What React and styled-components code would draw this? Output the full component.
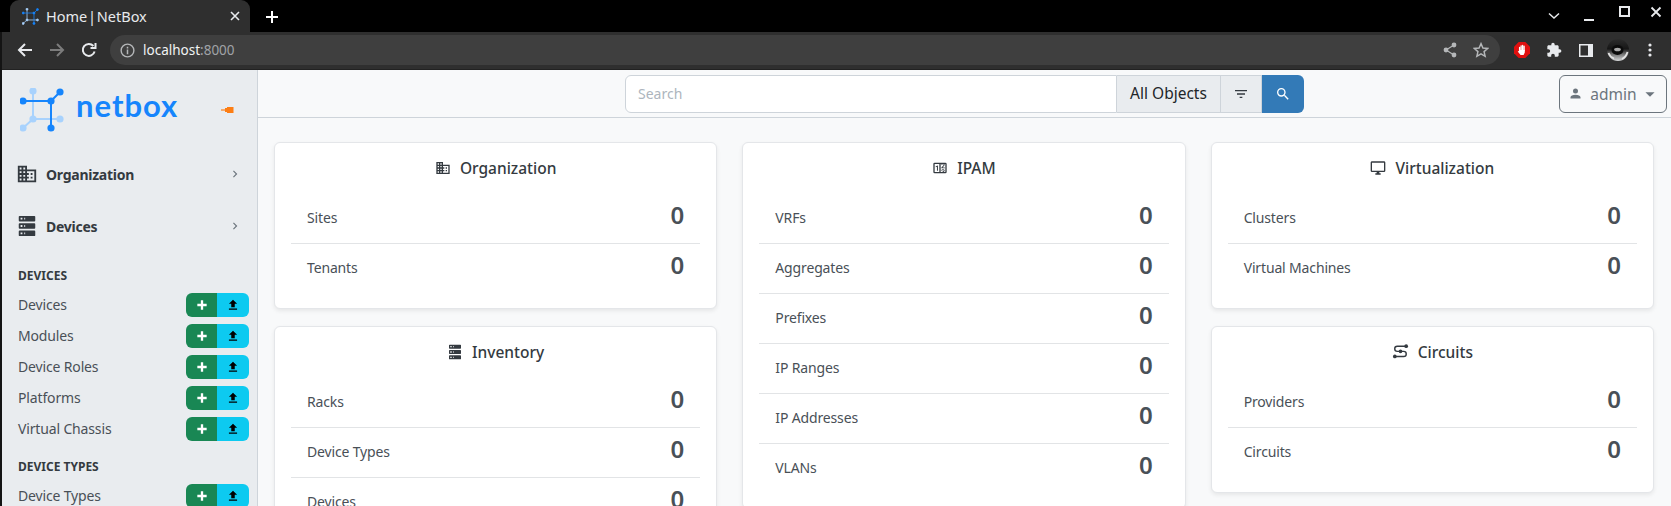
import React from 'react';
import styled, { createGlobalStyle } from 'styled-components';

const UI_FONT = '"Noto Sans", "Open Sans", sans-serif';

const GlobalStyle = createGlobalStyle`
  html, body {
    margin: 0;
    padding: 0;
    height: 506px;
    overflow: hidden;
    background: #111;
    font-family: ${UI_FONT};
  }
  * { box-sizing: border-box; }
`;

const MDI = {
  domain: 'M18,15H16V17H18M18,11H16V13H18M20,19H12V17H14V15H12V13H14V11H12V9H20M10,7H8V5H10M10,11H8V9H10M10,15H8V13H10M10,19H8V17H10M6,7H4V5H6M6,11H4V9H6M6,15H4V13H6M6,19H4V17H6M12,7V3H2V21H22V7H12Z',
  server: 'M4,1H20A1,1 0 0,1 21,2V6A1,1 0 0,1 20,7H4A1,1 0 0,1 3,6V2A1,1 0 0,1 4,1M4,9H20A1,1 0 0,1 21,10V14A1,1 0 0,1 20,15H4A1,1 0 0,1 3,14V10A1,1 0 0,1 4,9M4,17H20A1,1 0 0,1 21,18V22A1,1 0 0,1 20,23H4A1,1 0 0,1 3,22V18A1,1 0 0,1 4,17M9,5H10V3H9V5M9,13H10V11H9V13M9,21H10V19H9V21M5,3V5H7V3H5M5,11V13H7V11H5M5,19V21H7V19H5Z',
  counter: 'M4,4H20A2,2 0 0,1 22,6V18A2,2 0 0,1 20,20H4A2,2 0 0,1 2,18V6A2,2 0 0,1 4,4M4,6V18H11V6H4M20,18V6H18.76C19,6.54 18.95,7.07 18.95,7.13C18.88,7.8 18.41,8.5 18.24,8.75L15.91,11.3L19.23,11.28L19.24,12.5L14.04,12.47L14,11.47C14,11.47 17.05,8.24 17.2,7.95C17.34,7.67 17.91,6 16.5,6C15.27,6.05 15.41,7.3 15.41,7.3L13.87,7.31C13.87,7.31 13.88,6.65 14.25,6H13V18H15.58L15.57,17.14L16.54,17.13C16.54,17.13 17.45,16.97 17.46,16.08C17.5,15.08 16.65,15.08 16.5,15.08C16.37,15.08 15.43,15.13 15.43,15.95H13.91C13.91,15.95 13.95,13.89 16.5,13.89C19.1,13.89 18.96,15.91 18.96,15.91C18.96,15.91 19,17.16 17.85,17.63L18.37,18H20M8.92,16H7.42V10.2L5.62,10.76V9.53L8.76,8.41H8.92V16Z',
  monitor: 'M21,16H3V4H21M21,2H3C1.89,2 1,2.89 1,4V16A2,2 0 0,0 3,18H10V20H8V22H16V20H14V18H21A2,2 0 0,0 23,16V4C23,2.89 22.1,2 21,2Z',
  magnify: 'M9.5,3A6.5,6.5 0 0,1 16,9.5C16,11.11 15.41,12.59 14.44,13.73L14.71,14H15.5L20.5,19L19,20.5L14,15.5V14.71L13.73,14.44C12.59,15.41 11.11,16 9.5,16A6.5,6.5 0 0,1 3,9.5A6.5,6.5 0 0,1 9.5,3M9.5,5C7,5 5,7 5,9.5C5,12 7,14 9.5,14C12,14 14,12 14,9.5C14,7 12,5 9.5,5Z',
  filter: 'M6,13H18V11H6M3,6V8H21V6M10,18H14V16H10V18Z',
  plus: 'M20 14H14V20H10V14H4V10H10V4H14V10H20V14Z',
  upload: 'M9,16V10H5L12,3L19,10H15V16H9M5,20V18H19V20H5Z',
  account: 'M12,4A4,4 0 0,1 16,8A4,4 0 0,1 12,12A4,4 0 0,1 8,8A4,4 0 0,1 12,4M12,14C16.42,14 20,15.79 20,18V20H4V18C4,15.79 7.58,14 12,14Z',
  chevron: 'M8.59,16.58L13.17,12L8.59,7.41L10,6L16,12L10,18L8.59,16.58Z',
  caret: 'M7,10L12,15L17,10H7Z',
};

const MdiIcon = ({ name, size = 16, color = 'currentColor' }) => (
  <svg width={size} height={size} viewBox="0 0 24 24" fill={color} style={{ flex: 'none', display: 'block' }}>
    <path d={MDI[name]} />
  </svg>
);

// transit-connection style glyph: an S line with a dot on each end and one in the middle
const CircuitIcon = ({ size = 17 }) => (
  <svg width={size} height={size} viewBox="0 0 24 24" fill="currentColor" style={{ flex: 'none', display: 'block' }}>
    <path d="M20 4.5H7.5A3.5 3.5 0 0 0 7.5 11.8H16.5A3.5 3.5 0 0 1 16.5 19H4" fill="none" stroke="currentColor" strokeWidth="2" />
    <circle cx="20" cy="4.5" r="2.6" />
    <circle cx="12" cy="11.8" r="2.6" />
    <circle cx="4" cy="19" r="2.6" />
  </svg>
);

const NetboxMark = ({ size }) => (
  <svg width={size} height={size} viewBox="0 0 44 44" style={{ flex: 'none', display: 'block' }}>
    <g stroke="#a8d2fd" strokeWidth="2" fill="#a8d2fd">
      <path d="M13 3V31M13 31H40M13 31L3 40" fill="none" />
      <circle cx="13" cy="3" r="2.6" />
      <circle cx="13" cy="31" r="2.6" />
      <circle cx="40" cy="31" r="2.6" />
      <circle cx="3" cy="40" r="2.6" />
    </g>
    <g stroke="#1685fc" strokeWidth="2" fill="#1685fc">
      <path d="M3 13H31M31 13V40M31 13L40 4" fill="none" />
      <circle cx="3" cy="13" r="2.6" />
      <circle cx="31" cy="13" r="2.6" />
      <circle cx="40" cy="4" r="2.6" />
      <circle cx="31" cy="40" r="2.6" />
    </g>
  </svg>
);

/* browser chrome */
const Shell = styled.div`
  height: 506px;
  padding-left: 2px;
  display: flex;
  flex-direction: column;
  overflow: hidden;
  background: #141414;
`;

const TabStrip = styled.div`
  height: 32px;
  flex: none;
  display: flex;
  align-items: flex-end;
  background: #000;
  margin-left: -2px;
  padding-left: 10px;
`;

const Tab = styled.div`
  width: 240px;
  height: 32px;
  background: #2f2f2f;
  border-radius: 9px 9px 0 0;
  display: flex;
  align-items: center;
  padding: 0 9px 0 12px;
  color: #e8eaed;
  font-size: 14.5px;
`;

const TabTitle = styled.span`
  margin-left: 7px;
  flex: 1;
  white-space: nowrap;
  word-spacing: -3px;
`;

const NewTab = styled.div`
  width: 44px;
  display: flex;
  justify-content: center;
  align-items: center;
  height: 30px;
`;

const WindowControls = styled.div`
  margin-left: auto;
  display: flex;
  align-items: center;
  height: 32px;
  padding-right: 9px;
  gap: 16px;
`;

const Toolbar = styled.div`
  height: 38px;
  flex: none;
  background: #2f2f2f;
  border-bottom: 1px solid #222;
  display: flex;
  align-items: center;
  padding: 0 0 1px 7px;
`;

const NavIcon = styled.div`
  width: 32px;
  display: flex;
  justify-content: center;
  color: ${(p) => (p.$dim ? '#7c7c7c' : '#e8eaed')};
`;

const Omnibox = styled.div`
  margin-left: 5px;
  width: 1390px;
  height: 30px;
  border-radius: 15px;
  background: #3f3f3f;
  display: flex;
  align-items: center;
  padding: 0 11px 0 10px;
  font-size: 13.5px;
  color: #f1f3f4;
  flex: none;
`;

const UrlHost = styled.span`
  margin-left: 8px;
`;

const UrlPort = styled.span`
  color: #a0a3a7;
`;

const OmniActions = styled.div`
  margin-left: auto;
  display: flex;
  gap: 16px;
  color: #b5b7b9;
  align-items: center;
`;

const Extensions = styled.div`
  display: flex;
  align-items: center;
  margin-left: 6px;
`;

const ExtSlot = styled.div`
  width: 32px;
  display: flex;
  justify-content: center;
  align-items: center;
  color: #e8eaed;
`;

/* app */
const Body = styled.div`
  flex: 1;
  min-height: 0;
  display: flex;
`;

const Sidebar = styled.aside`
  width: 256px;
  flex: none;
  background: #e9ecef;
  border-right: 1px solid #ced4da;
  overflow: hidden;
`;

const Brand = styled.div`
  height: 78px;
  display: flex;
  align-items: flex-start;
  padding: 18px 0 0 18px;
`;

const BrandName = styled.span`
  margin: -1px 0 0 12px;
  font-family: Lato, sans-serif;
  font-weight: 700;
  font-size: 31px;
  line-height: 36px;
  letter-spacing: 1px;
  color: #1685fc;
`;

const Pin = styled.div`
  margin: 18px 0 0 43px;
  line-height: 0;
`;

const NavGroup = styled.div`
  height: 52px;
  display: flex;
  align-items: center;
  padding: 0 15px 0 14px;
  font-size: 14px;
  font-weight: 700;
  color: #343a40;
`;

const NavGroupLabel = styled.span`
  margin-left: 8px;
  flex: 1;
  letter-spacing: -0.25px;
`;

const NavChevron = styled.div`
  color: #6c757d;
`;

const Section = styled.div`
  padding-top: ${(p) => p.$top}px;
`;

const SectionTitle = styled.div`
  height: 27px;
  line-height: 28px;
  padding-left: 16px;
  font-size: 12px;
  font-weight: 700;
  color: #343a40;
  text-transform: uppercase;
`;

const SideRow = styled.div`
  height: 31px;
  display: flex;
  align-items: center;
  justify-content: space-between;
  padding: 0 8px 0 16px;
  font-size: 14px;
  color: #495057;
  letter-spacing: -0.15px;
`;

const ButtonGroup = styled.div`
  display: flex;
  height: 24px;
  border-radius: 6px;
  overflow: hidden;
`;

const AddButton = styled.div`
  width: 31px;
  display: flex;
  align-items: center;
  justify-content: center;
  background: #198754;
  color: #fff;
`;

const ImportButton = styled.div`
  width: 32px;
  display: flex;
  align-items: center;
  justify-content: center;
  background: #0dcaf0;
  color: #000;
`;

const Main = styled.main`
  flex: 1;
  min-width: 0;
  background: #f8f9fa;
  display: flex;
  flex-direction: column;
`;

const Header = styled.header`
  height: 48px;
  flex: none;
  border-bottom: 1px solid #ced4da;
  display: flex;
  align-items: flex-start;
  padding: 5px 4px 0 367px;
  justify-content: space-between;
`;

const SearchGroup = styled.div`
  width: 679px;
  height: 38px;
  display: flex;
  font-size: 15.5px;
`;

const SearchInput = styled.div`
  flex: 1;
  background: #fff;
  border: 1px solid #ced4da;
  border-radius: 6px 0 0 6px;
  display: flex;
  align-items: center;
  padding: 0 0 2px 12px;
  font-size: 14px;
  color: #adb5bd;
`;

const ObjectSelect = styled.div`
  width: 104px;
  background: #e9ecef;
  border: 1px solid #ced4da;
  border-left: none;
  display: flex;
  align-items: center;
  justify-content: center;
  color: #212529;
  white-space: nowrap;
  padding-bottom: 2px;
`;

const FilterButton = styled.div`
  width: 41px;
  background: #e9ecef;
  border: 1px solid #ced4da;
  border-left: none;
  display: flex;
  align-items: center;
  justify-content: center;
  color: #343a40;
`;

const SearchButton = styled.div`
  width: 42px;
  background: #337ab7;
  border-radius: 0 6px 6px 0;
  display: flex;
  align-items: center;
  justify-content: center;
  color: #fff;
`;

const UserButton = styled.div`
  width: 108px;
  height: 38px;
  border: 1px solid #6c757d;
  border-radius: 6px;
  display: flex;
  align-items: center;
  justify-content: center;
  font-size: 15.5px;
  color: #6c757d;
  padding: 0 0 1px 3px;
`;

const UserName = styled.span`
  margin: 0 2px 0 7px;
`;

const Content = styled.div`
  flex: 1;
  min-height: 0;
  overflow: hidden;
  padding: 24px 17px 0 16px;
  display: grid;
  grid-template-columns: repeat(3, 1fr);
  column-gap: 25px;
  align-items: start;
`;

const Column = styled.div`
  display: flex;
  flex-direction: column;
  gap: 17px;
`;

const Card = styled.section`
  background: #fff;
  border: 1px solid #e4e6e9;
  border-radius: 6px;
  box-shadow: 0 2px 4px rgba(0, 0, 0, 0.075);
  padding: 0 16px 14px;
`;

const CardTitle = styled.h5`
  margin: 0;
  height: 51px;
  padding-bottom: 2px;
  display: flex;
  align-items: center;
  justify-content: center;
  gap: 9px;
  font-size: 15.5px;
  font-weight: 500;
  color: #343a40;
`;

const CountRow = styled.div`
  height: 50px;
  display: flex;
  justify-content: space-between;
  align-items: center;
  padding: 0 16px;
  border-bottom: ${(p) => (p.$last ? 'none' : '1px solid #e2e4e6')};
`;

const CountLabel = styled.span`
  font-size: 14px;
  color: #495057;
  letter-spacing: -0.15px;
  padding-bottom: 3px;
`;

const CountValue = styled.span`
  font-size: 24px;
  font-weight: 600;
  color: #495057;
  line-height: 1;
  padding-bottom: 8px;
`;

const COLUMNS = [
  [
    { title: 'Organization', icon: 'domain', rows: ['Sites', 'Tenants'] },
    { title: 'Inventory', icon: 'server', rows: ['Racks', 'Device Types', 'Devices'] },
  ],
  [
    { title: 'IPAM', icon: 'counter', rows: ['VRFs', 'Aggregates', 'Prefixes', 'IP Ranges', 'IP Addresses', 'VLANs'] },
  ],
  [
    { title: 'Virtualization', icon: 'monitor', rows: ['Clusters', 'Virtual Machines'] },
    { title: 'Circuits', icon: 'circuit', rows: ['Providers', 'Circuits'] },
  ],
];

const SideItem = ({ label }) => (
  <SideRow>
    {label}
    <ButtonGroup>
      <AddButton><MdiIcon name="plus" size={14} /></AddButton>
      <ImportButton><MdiIcon name="upload" size={14} /></ImportButton>
    </ButtonGroup>
  </SideRow>
);

const stroke = { fill: 'none', stroke: 'currentColor', strokeWidth: 2 };

const App = () => (
  <Shell>
    <GlobalStyle />
    <TabStrip>
      <Tab>
        <NetboxMark size={17} />
        <TabTitle>Home | NetBox</TabTitle>
        <svg width="12" height="12" viewBox="0 0 12 12">
          <path d="M2 2L10 10M10 2L2 10" stroke="#e8eaed" strokeWidth="1.6" />
        </svg>
      </Tab>
      <NewTab>
        <svg width="14" height="14" viewBox="0 0 14 14">
          <path d="M7 1V13M1 7H13" stroke="#fff" strokeWidth="2" />
        </svg>
      </NewTab>
      <WindowControls>
        <svg width="12" height="12" viewBox="0 0 12 12" style={{ marginRight: 7 }}>
          <path d="M1 3.5L6 8L11 3.5" fill="none" stroke="#e8eaed" strokeWidth="1.5" />
        </svg>
        <svg width="12" height="12" viewBox="0 0 12 12" style={{ marginRight: 8 }}>
          <path d="M1 10H11" stroke="#e8eaed" strokeWidth="2" />
        </svg>
        <svg width="12" height="12" viewBox="0 0 12 12" style={{ marginTop: -8, marginRight: 3 }}>
          <rect x="1" y="1" width="9" height="9" fill="none" stroke="#e8eaed" strokeWidth="2" />
        </svg>
        <svg width="12" height="12" viewBox="0 0 12 12" style={{ marginTop: -8 }}>
          <path d="M1.5 1.5L10.5 10.5M10.5 1.5L1.5 10.5" stroke="#e8eaed" strokeWidth="1.8" />
        </svg>
      </WindowControls>
    </TabStrip>
    <Toolbar>
      <NavIcon>
        <svg width="16" height="16" viewBox="0 0 16 16"><path d="M15 8H2M8 2L2 8L8 14" style={stroke} /></svg>
      </NavIcon>
      <NavIcon $dim>
        <svg width="16" height="16" viewBox="0 0 16 16"><path d="M1 8H14M8 2L14 8L8 14" style={stroke} /></svg>
      </NavIcon>
      <NavIcon>
        <svg width="16" height="16" viewBox="0 0 16 16"><path d="M13.6 9.5A6 6 0 1 1 12.4 4M14.5 1V6H9.5" style={stroke} /></svg>
      </NavIcon>
      <Omnibox>
        <svg width="15" height="15" viewBox="0 0 16 16" style={{ color: '#b5b7b9', flex: 'none' }}>
          <circle cx="8" cy="8" r="6.8" fill="none" stroke="currentColor" strokeWidth="1.5" />
          <path d="M8 7V12M8 4V5.8" stroke="currentColor" strokeWidth="1.6" />
        </svg>
        <UrlHost>localhost<UrlPort>:8000</UrlPort></UrlHost>
        <OmniActions>
          <svg width="14" height="16" viewBox="0 0 14 16">
            <g fill="currentColor"><circle cx="11" cy="3" r="2.4" /><circle cx="3" cy="8" r="2.4" /><circle cx="11" cy="13" r="2.4" /></g>
            <path d="M11 3L3 8L11 13" fill="none" stroke="currentColor" strokeWidth="1.2" />
          </svg>
          <svg width="16" height="16" viewBox="0 0 24 24">
            <path d="M12 2.5L14.9 9L22 9.7L16.6 14.4L18.2 21.4L12 17.7L5.8 21.4L7.4 14.4L2 9.7L9.1 9Z" fill="none" stroke="currentColor" strokeWidth="2.2" />
          </svg>
        </OmniActions>
      </Omnibox>
      <Extensions>
        <ExtSlot>
          <svg width="16" height="16" viewBox="0 0 16 16">
            <path d="M4.7 0H11.3L16 4.7V11.3L11.3 16H4.7L0 11.3V4.7Z" fill="#e0100f" />
            <path d="M5.6 5.5V9M7.1 3.8V8.5M8.6 3.4V8.5M10.1 4.2V8.5" stroke="#fff" strokeWidth="1.3" strokeLinecap="round" />
            <path d="M5 8H10.8V10.5L9.6 13H6.6L3.7 9.6L4.6 8.9L5 9.2Z" fill="#fff" />
          </svg>
        </ExtSlot>
        <ExtSlot>
          <svg width="16" height="16" viewBox="0 0 24 24" fill="currentColor">
            <path d="M20.5 11H19V7c0-1.1-.9-2-2-2h-4V3.5C13 2.12 11.88 1 10.5 1S8 2.12 8 3.5V5H4c-1.1 0-1.99.9-1.99 2v3.8H3.5c1.49 0 2.7 1.21 2.7 2.7s-1.21 2.7-2.7 2.7H2V20c0 1.1.9 2 2 2h3.8v-1.5c0-1.49 1.21-2.7 2.7-2.7 1.49 0 2.7 1.21 2.7 2.7V22H17c1.1 0 2-.9 2-2v-4h1.5c1.38 0 2.5-1.12 2.5-2.5S21.88 11 20.5 11z" />
          </svg>
        </ExtSlot>
        <ExtSlot>
          <svg width="14" height="13" viewBox="0 0 14 13">
            <rect width="14" height="13" fill="#e8eaed" />
            <rect x="1.5" y="1.5" width="7.5" height="10" fill="#2f2f2f" />
          </svg>
        </ExtSlot>
        <ExtSlot>
          <svg width="22" height="22" viewBox="0 0 22 22">
            <defs>
              <linearGradient id="avatarFill" x1="0" y1="0" x2="0" y2="1">
                <stop offset="0" stopColor="#2c2c2c" />
                <stop offset="0.45" stopColor="#161616" />
                <stop offset="0.7" stopColor="#777" />
                <stop offset="1" stopColor="#d8dadb" />
              </linearGradient>
            </defs>
            <circle cx="11" cy="11" r="11" fill="url(#avatarFill)" />
            <ellipse cx="10.5" cy="11" rx="6" ry="5" fill="#0b0b0b" />
            <ellipse cx="10.5" cy="10.5" rx="3.4" ry="1.8" fill="#a9a9a9" />
            <path d="M1.5 14Q3 18 7 19.5M15 20Q19 18 20.5 13" fill="none" stroke="#e4e4e4" strokeWidth="1.8" />
          </svg>
        </ExtSlot>
        <ExtSlot>
          <svg width="4" height="14" viewBox="0 0 4 14" fill="#e8eaed">
            <circle cx="2" cy="2" r="1.6" /><circle cx="2" cy="7" r="1.6" /><circle cx="2" cy="12" r="1.6" />
          </svg>
        </ExtSlot>
      </Extensions>
    </Toolbar>
    <Body>
      <Sidebar>
        <Brand>
          <NetboxMark size={44} />
          <BrandName>netbox</BrandName>
          <Pin>
            <svg width="13" height="8" viewBox="0 0 13 8">
              <path d="M0 4H5" stroke="#fd7e14" strokeWidth="1.2" />
              <path d="M4 2H6V1H12.5V7H6V6H4Z" fill="#fd7e14" />
            </svg>
          </Pin>
        </Brand>
        <NavGroup>
          <MdiIcon name="domain" size={22} />
          <NavGroupLabel>Organization</NavGroupLabel>
          <NavChevron><MdiIcon name="chevron" size={14} /></NavChevron>
        </NavGroup>
        <NavGroup>
          <MdiIcon name="server" size={22} />
          <NavGroupLabel>Devices</NavGroupLabel>
          <NavChevron><MdiIcon name="chevron" size={14} /></NavChevron>
        </NavGroup>
        <Section $top={10}>
          <SectionTitle>Devices</SectionTitle>
          {['Devices', 'Modules', 'Device Roles', 'Platforms', 'Virtual Chassis'].map((label) => (
            <SideItem key={label} label={label} />
          ))}
        </Section>
        <Section $top={9}>
          <SectionTitle>Device Types</SectionTitle>
          <SideItem label="Device Types" />
        </Section>
      </Sidebar>
      <Main>
        <Header>
          <SearchGroup>
            <SearchInput>Search</SearchInput>
            <ObjectSelect>All Objects</ObjectSelect>
            <FilterButton><MdiIcon name="filter" size={16} /></FilterButton>
            <SearchButton><MdiIcon name="magnify" size={16} /></SearchButton>
          </SearchGroup>
          <UserButton>
            <MdiIcon name="account" size={15} />
            <UserName>admin</UserName>
            <MdiIcon name="caret" size={22} />
          </UserButton>
        </Header>
        <Content>
          {COLUMNS.map((cards) => (
            <Column key={cards[0].title}>
              {cards.map((card) => (
                <Card key={card.title}>
                  <CardTitle>
                    {card.icon === 'circuit' ? <CircuitIcon /> : <MdiIcon name={card.icon} size={16} />}
                    {card.title}
                  </CardTitle>
                  {card.rows.map((row, i) => (
                    <CountRow key={row} $last={i === card.rows.length - 1}>
                      <CountLabel>{row}</CountLabel>
                      <CountValue>0</CountValue>
                    </CountRow>
                  ))}
                </Card>
              ))}
            </Column>
          ))}
        </Content>
      </Main>
    </Body>
  </Shell>
);

export default App;
